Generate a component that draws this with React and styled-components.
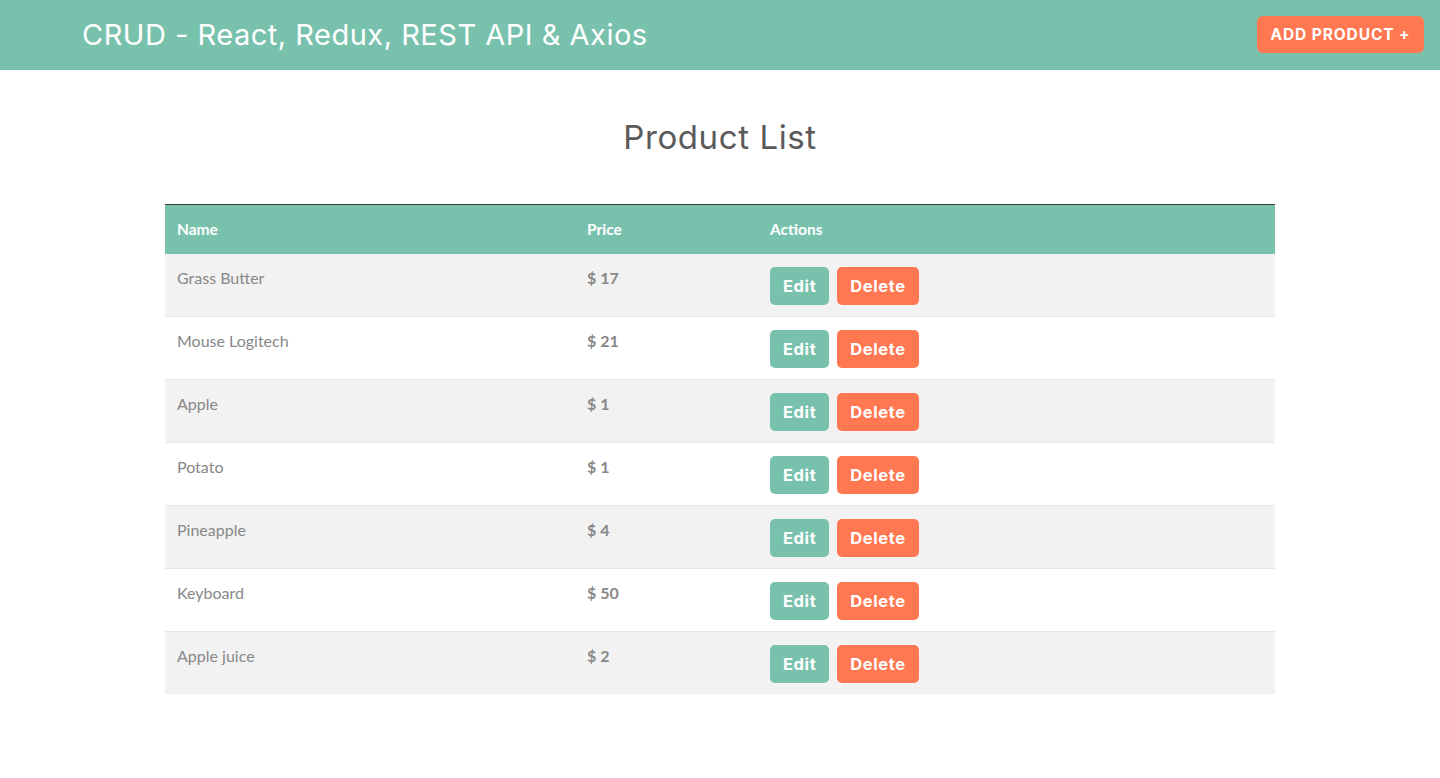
import React from "react";
import styled, { createGlobalStyle } from "styled-components";

const GlobalStyle = createGlobalStyle`
  body {
    margin: 0;
    background: #fff;
    font-family: "Lato", "Liberation Sans", sans-serif;
    color: #888;
  }
`;

const products = [
  { id: 1, name: "Grass Butter", price: 17 },
  { id: 2, name: "Mouse Logitech", price: 21 },
  { id: 3, name: "Apple", price: 1 },
  { id: 4, name: "Potato", price: 1 },
  { id: 5, name: "Pineapple", price: 4 },
  { id: 6, name: "Keyboard", price: 50 },
  { id: 7, name: "Apple juice", price: 2 },
];

const App = () => {
  return (
    <>
      <GlobalStyle />
      <Navbar>
        <Brand>CRUD - React, Redux, REST API &amp; Axios</Brand>
        <AddButton>ADD PRODUCT +</AddButton>
      </Navbar>
      <Main>
        <Title>Product List</Title>
        <Table>
          <thead>
            <tr>
              <Th $width="410px">Name</Th>
              <Th $width="183px">Price</Th>
              <Th>Actions</Th>
            </tr>
          </thead>
          <tbody>
            {products.map((p) => (
              <Row key={p.id}>
                <Td>{p.name}</Td>
                <Td>
                  <Price>$ {p.price}</Price>
                </Td>
                <Td>
                  <Actions>
                    <ActionButton $color="#78c2ad">Edit</ActionButton>
                    <ActionButton $color="#ff7851">Delete</ActionButton>
                  </Actions>
                </Td>
              </Row>
            ))}
          </tbody>
        </Table>
      </Main>
    </>
  );
};

const Navbar = styled.nav`
  height: 70px;
  background: #78c2ad;
  display: flex;
  align-items: center;
  justify-content: space-between;
  padding: 0 16px 0 82px;
`;

const Brand = styled.h1`
  margin: 0 0 2px;
  font-family: "Inter", "Noto Sans", sans-serif;
  font-weight: 400;
  font-size: 29px;
  letter-spacing: 0.5px;
  color: #fff;
`;

const AddButton = styled.button`
  height: 37px;
  width: 167px;
  border: none;
  border-radius: 6px;
  background: #ff7851;
  color: #fff;
  font-family: "Inter", "Noto Sans", sans-serif;
  font-weight: 700;
  font-size: 15.5px;
  letter-spacing: 0.9px;
  margin-top: -2px;
`;

const Main = styled.main`
  width: 1110px;
  margin: 0 auto;
  padding-top: 47px;
`;

const Title = styled.h2`
  margin: 0 0 47px;
  text-align: center;
  font-family: "Inter", "Noto Sans", sans-serif;
  font-weight: 400;
  font-size: 33px;
  line-height: 40px;
  letter-spacing: 0.6px;
  color: #5a5a5a;
`;

const Table = styled.table`
  width: 100%;
  table-layout: fixed;
  border-collapse: collapse;
  border-top: 1px solid #343a40;
`;

const Th = styled.th`
  box-sizing: border-box;
  width: ${({ $width }) => $width || "auto"};
  background: #78c2ad;
  color: #fff;
  text-align: left;
  padding: 12px 12px 11px;
  font-family: "Lato", sans-serif;
  font-weight: 700;
  font-size: 15.5px;
  line-height: 25px;
`;

const Row = styled.tr`
  background: #fff;
  &:nth-child(odd) {
    background: #f2f2f2;
  }
  &:first-child td {
    border-top-color: transparent;
  }
`;

const Td = styled.td`
  padding: 12px;
  vertical-align: top;
  font-size: 16px;
  line-height: 24px;
  color: #888;
  border-top: 1px solid #e6e6e6;
`;

const Price = styled.span`
  font-weight: 700;
`;

const Actions = styled.div`
  display: flex;
  gap: 8px;
  margin-top: 1px;
  margin-bottom: -1px;
`;

const ActionButton = styled.button`
  height: 38px;
  padding: 0 13px;
  border: none;
  border-radius: 5px;
  background: ${({ $color }) => $color};
  color: #fff;
  font-family: "Inter", "Noto Sans", sans-serif;
  font-weight: 700;
  font-size: 16.5px;
  letter-spacing: 0.6px;
`;

export default App;
